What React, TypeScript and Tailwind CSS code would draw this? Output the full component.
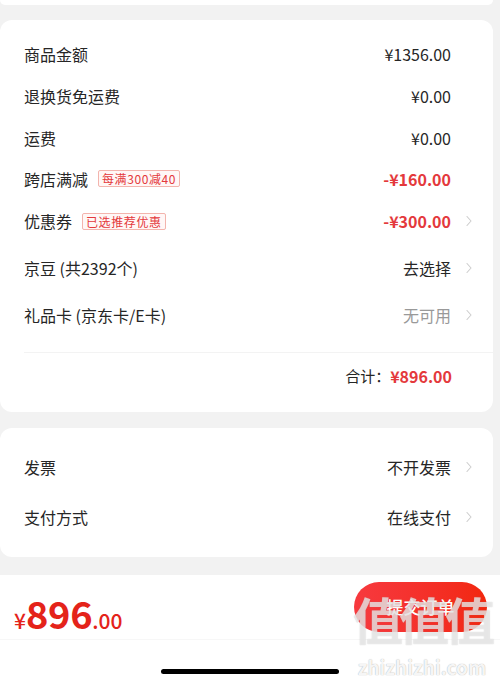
import React from "react";

const font = { fontFamily: '"Noto Sans CJK SC", "Noto Sans", sans-serif' };

function Chevron({ hidden }: { hidden?: boolean }) {
  return (
    <svg width="6" height="12" viewBox="0 0 6 12" className={hidden ? "invisible" : ""}>
      <polyline points="1,1.5 5,6 1,10.5" fill="none" stroke="#cdcdcd" strokeWidth="1.1" strokeLinecap="round" strokeLinejoin="round" />
    </svg>
  );
}

function Badge({ children }: { children: React.ReactNode }) {
  return (
    <span className="ml-[10px] border border-[#f3b4ad] bg-[#fff7f6] rounded-[2px] px-[3px] text-[12px] leading-[15px] tracking-[0.6px] text-[#e4393c]">
      {children}
    </span>
  );
}

function Row({
  label,
  badge,
  value,
  valueClass = "text-[#262626]",
  arrow,
  h,
}: {
  label: string;
  badge?: string;
  value: string;
  valueClass?: string;
  arrow?: boolean;
  h: string;
}) {
  return (
    <div className={`flex items-center justify-between ${h}`}>
      <div className="flex items-center">
        <span className="text-[16px] text-[#262626]">{label}</span>
        {badge && <Badge>{badge}</Badge>}
      </div>
      <div className="flex items-center gap-[15px]">
        <span className={`text-[16px] ${valueClass}`}>{value}</span>
        <Chevron hidden={!arrow} />
      </div>
    </div>
  );
}

export default function App() {
  return (
    <div className="relative w-[500px] h-[684px] bg-[#f2f2f2] overflow-hidden" style={font}>
      {/* previous card end */}
      <div className="mr-[7px] h-[5px] bg-white rounded-b-[12px]" />

      {/* price details */}
      <div className="mt-[15px] mr-[7px] bg-white rounded-[12px] pt-[13px] pb-[13px]">
        <div className="pl-[24px] pr-[21px]">
          <Row h="h-[42px]" label="商品金额" value="¥1356.00" />
          <Row h="h-[42px]" label="退换货免运费" value="¥0.00" />
          <Row h="h-[41px]" label="运费" value="¥0.00" />
          <Row h="h-[41px]" label="跨店满减" badge="每满300减40" value="-¥160.00" valueClass="text-[#e4393c] font-semibold" />
          <Row h="h-[44px]" label="优惠券" badge="已选推荐优惠" value="-¥300.00" valueClass="text-[#e4393c] font-semibold" arrow />
          <Row h="h-[50px]" label="京豆 (共2392个)" value="去选择" arrow />
          <Row h="h-[44px]" label="礼品卡 (京东卡/E卡)" value="无可用" valueClass="text-[#999]" arrow />
        </div>
        <div className="mt-[15px] ml-[24px] border-t border-[#f3f3f3]" />
        <div className="h-[46px] flex items-center justify-end pr-[41px]">
          <span className="text-[15px] text-[#262626]">合计：</span>
          <span className="text-[16px] font-semibold text-[#e4393c]">¥896.00</span>
        </div>
      </div>

      {/* invoice & payment */}
      <div className="mt-[16px] mr-[7px] bg-white rounded-[12px] pt-[14px] pb-[15px] pl-[24px] pr-[21px]">
        <Row h="h-[50px]" label="发票" value="不开发票" arrow />
        <Row h="h-[50px]" label="支付方式" value="在线支付" arrow />
      </div>

      {/* bottom bar */}
      <div className="absolute left-0 right-0 bottom-0 h-[109px] bg-white">
        <div className="h-[65px] flex items-start justify-between pl-[14px] pr-[13px] border-b border-[#f7f7f7]">
          <div className="flex items-baseline text-[#e4231a] pt-[19px]">
            <span className="text-[21px] font-medium">¥</span>
            <span className="text-[38px] font-bold leading-none tracking-[-0.3px]">896</span>
            <span className="text-[21px] font-medium">.00</span>
          </div>
          <button className="mt-[7px] w-[133px] h-[50px] rounded-full bg-gradient-to-r from-[#f7393e] to-[#f2270c] text-white text-[17px] font-medium">
            提交订单
          </button>
        </div>
        <div className="flex justify-center pt-[29px]">
          <div className="w-[178px] h-[5px] rounded-full bg-black" />
        </div>
      </div>

      {/* watermark */}
      <div className="absolute left-[348px] top-[588px] w-[148px] flex flex-col items-center pointer-events-none">
        <span
          className="text-[50px] leading-[60px] font-bold text-white/60 tracking-[-4px]"
          style={{ textShadow: "0 0 1px rgba(150,150,150,0.6)" }}
        >
          值值值
        </span>
        <span
          className="mt-[8px] text-[19px] leading-[22px] text-white/90 font-semibold"
          style={{ textShadow: "0 0 1px #999" }}
        >
          zhizhizhi.com
        </span>
      </div>
    </div>
  );
}
